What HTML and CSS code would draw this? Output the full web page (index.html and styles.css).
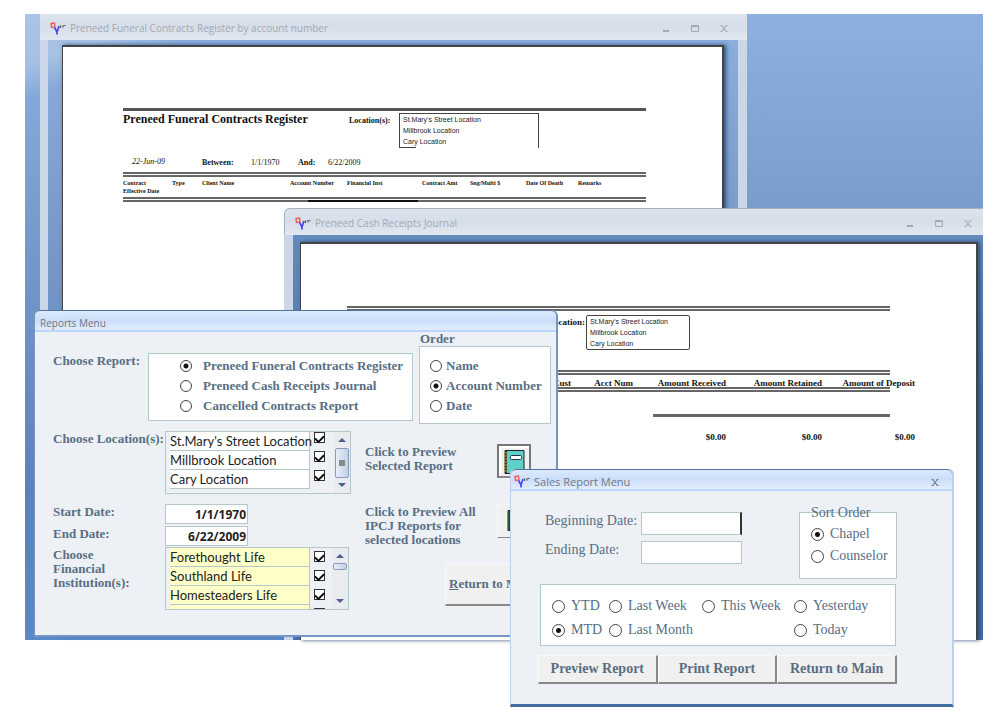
FILE: index.html
```html
<!DOCTYPE html>
<html lang="en">
<head>
<meta charset="utf-8">
<title>Preneed Reports</title>
<link rel="stylesheet" href="styles.css">
</head>
<body>
<svg class="defs" aria-hidden="true">
  <symbol id="logo" viewBox="0 0 18 13">
    <path d="M2 1.500l3.500-.5.5 4-3.500.5z" fill="none" stroke="#f25a5a" stroke-width="1.400"/>
    <path d="M5.500 5.500L8 10l2-6M8 9v3.500" fill="none" stroke="#4646f0" stroke-width="1.700"/>
    <path d="M11.500 3.500v2.500M14 3v2.500M15 3.500h1.500" fill="none" stroke="#555" stroke-width="1.200"/>
  </symbol>
  <symbol id="min" viewBox="0 0 10 10"><path d="M2 8h6" stroke="currentColor" stroke-width="2"/></symbol>
  <symbol id="max" viewBox="0 0 10 10"><path d="M1.500 2.500h7v6h-7zM1 3.500h8" fill="none" stroke="currentColor"/></symbol>
  <symbol id="close" viewBox="0 0 10 10"><path d="M2.500 2.500l5 6M7.500 2.500l-5 6M1.500 2.500h2M6.500 2.500h2M1.500 8.500h2M6.500 8.500h2" fill="none" stroke="currentColor" stroke-width="1.100"/></symbol>
  <symbol id="up" viewBox="0 0 10 6"><path d="M5 1l4 4H1z" fill="#4d5f92"/></symbol>
  <symbol id="down" viewBox="0 0 10 6"><path d="M1 1h8L5 5z" fill="#4d5f92"/></symbol>
  <symbol id="book" viewBox="0 0 26 26">
    <path d="M4 1.500h19v23H4z" fill="#5fcfca" stroke="#222"/>
    <path d="M5 2v22" stroke="#333" stroke-width="2"/>
    <path d="M3 4h4M3 7h4M3 10h4M3 13h4M3 16h4M3 19h4M3 22h4" stroke="#b7a92c"/>
    <rect x="9.500" y="6.500" width="11" height="4" rx="1" fill="#fff" stroke="#234"/>
  </symbol>
  <symbol id="books" viewBox="0 0 26 26">
    <path d="M7 2.500h17v20H7z" fill="#5f9a4c" stroke="#222"/>
    <path d="M8.500 3v19" stroke="#2c4a22" stroke-width="2"/>
  </symbol>
</svg>
<main class="desktop">
  <section class="window register">
    <header class="titlebar inactive">
      <svg class="logo"><use href="#logo"/></svg><h1>Preneed Funeral Contracts Register by account number</h1>
      <button aria-label="Minimize"><svg><use href="#min"/></svg></button>
      <button aria-label="Maximize"><svg><use href="#max"/></svg></button>
      <button aria-label="Close"><svg><use href="#close"/></svg></button>
    </header>
    <div class="register-body">
      <article class="sheet register-sheet">
        <hr class="rule-thick">
        <div class="register-head">
          <h2>Preneed Funeral Contracts Register</h2>
          <strong>Location(s):</strong>
          <ul class="places open"><li>St.Mary's Street Location</li><li>Millbrook Location</li><li>Cary Location</li></ul>
        </div>
        <div class="register-dates"><em>22-Jun-09</em><b>Between:</b><span>1/1/1970</span><b>And:</b><span>6/22/2009</span></div>
        <table class="register-table">
          <colgroup><col class="c1"><col class="c2"><col class="c3"><col class="c4"><col class="c5"><col class="c6"><col class="c7"><col class="c8"><col></colgroup>
          <tr><th>Contract<br>Effective Date</th><th>Type</th><th>Client Name</th><th>Account Number</th><th>Financial Inst</th><th>Contract Amt</th><th>Sng/Multi $</th><th>Date Of Death</th><th>Remarks</th></tr>
        </table>
        <div class="sort-mark"></div>
      </article>
    </div>
  </section>

  <section class="window journal">
    <header class="titlebar inactive">
      <svg class="logo"><use href="#logo"/></svg><h1>Preneed Cash Receipts Journal</h1>
      <button aria-label="Minimize"><svg><use href="#min"/></svg></button>
      <button aria-label="Maximize"><svg><use href="#max"/></svg></button>
      <button aria-label="Close"><svg><use href="#close"/></svg></button>
    </header>
    <div class="journal-body">
      <article class="sheet journal-sheet">
        <div class="journal-head">
          <strong>Location:</strong>
          <ul class="places"><li>St.Mary's Street Location</li><li>Millbrook Location</li><li>Cary Location</li></ul>
        </div>
        <table class="journal-table">
          <colgroup><col class="j1"><col class="j2"><col class="j3"><col class="j4"><col></colgroup>
          <thead><tr><th>Cust</th><th>Acct Num</th><th>Amount Received</th><th>Amount Retained</th><th><span>Amount of Deposit</span></th></tr></thead>
          <tbody>
            <tr><td colspan="5" class="total-line"><hr></td></tr>
            <tr><td></td><td></td><td>$0.00</td><td>$0.00</td><td><span>$0.00</span></td></tr>
          </tbody>
        </table>
      </article>
    </div>
  </section>

  <section class="window reports">
    <header class="titlebar"><h1>Reports Menu</h1></header>
    <form class="reports-body">
      <div class="report-choice">
        <span class="caption">Choose Report:</span>
        <div class="group report-group" role="radiogroup" aria-label="Choose Report">
          <label><input type="radio" name="report" checked>Preneed Funeral Contracts Register</label>
          <label><input type="radio" name="report">Preneed Cash Receipts Journal</label>
          <label><input type="radio" name="report">Cancelled Contracts Report</label>
        </div>
        <div class="order" role="radiogroup" aria-labelledby="order-title">
          <span id="order-title">Order</span>
          <div class="group order-group">
            <label><input type="radio" name="order">Name</label>
            <label><input type="radio" name="order" checked>Account Number</label>
            <label><input type="radio" name="order">Date</label>
          </div>
        </div>
      </div>
      <div class="columns">
        <div class="fields">
          <span class="caption">Choose Location(s):</span>
          <div class="listbox">
            <ul class="rows">
              <li><label for="l1">St.Mary's Street Location</label><input id="l1" type="checkbox" checked></li>
              <li><label for="l2">Millbrook Location</label><input id="l2" type="checkbox" checked></li>
              <li><label for="l3">Cary Location</label><input id="l3" type="checkbox" checked></li>
            </ul>
            <div class="scroll"><svg><use href="#up"/></svg><i class="thumb tall"></i><svg><use href="#down"/></svg></div>
          </div>
          <label for="start">Start Date:</label><input class="date" id="start" type="text" value="1/1/1970">
          <label for="end">End Date:</label><input class="date" id="end" type="text" value="6/22/2009">
          <span class="caption">Choose<br>Financial<br>Institution(s):</span>
          <div class="listbox yellow">
            <ul class="rows">
              <li><label for="f1">Forethought Life</label><input id="f1" type="checkbox" checked></li>
              <li><label for="f2">Southland Life</label><input id="f2" type="checkbox" checked></li>
              <li><label for="f3">Homesteaders Life</label><input id="f3" type="checkbox" checked></li>
              <li><label for="f4">Pioneer Am. Life</label><input id="f4" type="checkbox" checked></li>
            </ul>
            <div class="scroll"><svg><use href="#up"/></svg><i class="thumb"></i><svg><use href="#down"/></svg></div>
          </div>
        </div>
        <div class="actions">
          <div class="action"><span>Click to Preview<br>Selected Report</span><button type="button" class="book strong" aria-label="Preview selected report"><svg><use href="#book"/></svg></button></div>
          <div class="action"><span>Click to Preview All<br>IPCJ Reports for<br>selected locations</span><button type="button" class="book" aria-label="Preview all reports"><svg><use href="#books"/></svg></button></div>
          <button type="button" class="push return"><u>R</u>eturn to Main</button>
        </div>
      </div>
    </form>
  </section>

  <section class="window sales">
    <header class="titlebar">
      <svg class="logo"><use href="#logo"/></svg><h1>Sales Report Menu</h1>
      <button aria-label="Close"><svg><use href="#close"/></svg></button>
    </header>
    <form class="sales-body">
      <div class="sales-top">
        <div class="period">
          <label for="begin">Beginning Date:</label><input class="focus" id="begin" type="text">
          <label for="ending">Ending Date:</label><input id="ending" type="text">
        </div>
        <div class="group sort" role="radiogroup" aria-labelledby="sort-title">
          <span id="sort-title">Sort Order</span>
          <label><input type="radio" name="sort" checked>Chapel</label>
          <label><input type="radio" name="sort">Counselor</label>
        </div>
      </div>
      <div class="group range" role="radiogroup" aria-label="Report period">
        <label><input type="radio" name="range">YTD</label>
        <label><input type="radio" name="range">Last Week</label>
        <label><input type="radio" name="range">This Week</label>
        <label><input type="radio" name="range">Yesterday</label>
        <label><input type="radio" name="range" checked>MTD</label>
        <label><input type="radio" name="range">Last Month</label>
        <label class="today"><input type="radio" name="range">Today</label>
      </div>
      <div class="sales-buttons">
        <button type="button" class="push">Preview Report</button>
        <button type="button" class="push">Print Report</button>
        <button type="button" class="push">Return to Main</button>
      </div>
    </form>
  </section>
</main>
</body>
</html>
```
FILE: styles.css
```css
* { box-sizing: border-box; }
body { min-height: 100vh; margin: 0; padding: 14px 17px 87px 25px; background: #fff; font-family: "Liberation Serif", serif; color: #586e83; }
h1, h2, ul, hr { margin: 0; padding: 0; }
li { list-style: none; }
button { padding: 0; font: inherit; color: inherit; }
.defs { display: none; }

.desktop {
  position: relative;
  height: calc(100vh - 101px);
  min-height: 626px;
  background:
    linear-gradient(160deg, rgba(255,255,255,.25) 0 50px, transparent 80px),
    linear-gradient(#8cb0e0, #7a9ccb 200px, #5b82b8 480px, #5a88c8);
}
.window { position: absolute; display: flex; flex-direction: column; }

.titlebar {
  display: flex;
  align-items: center;
  flex: none;
  height: 22px;
  padding: 4px 12px 0 2px;
  border-top: 1px solid #54729f;
  border-bottom: 2px solid #bbd6f8;
  border-radius: 5px 5px 0 0;
  background: linear-gradient(#dce9fb, #cbdef8 50%, #e2edfc);
  color: #6d7785;
}
.titlebar h1 { flex: 1; font: 11px/16px "Open Sans", sans-serif; white-space: nowrap; }
.titlebar button { width: 10px; height: 10px; margin-left: 19px; border: 0; background: none; }
.titlebar button svg { display: block; width: 10px; height: 10px; }
.logo { flex: none; width: 18px; height: 13px; margin-right: 3px; }
.inactive { height: 26px; padding: 2px 18px 0 9px; border: 0; border-radius: 0; background: linear-gradient(#dce3ec, #d6deea 50%, #e2e8f1); color: #a4a9b0; }
.inactive h1 { font-size: 10px; }

.sheet { border: solid #444; border-width: 2px 2px 0 1px; background: #fff; color: #111; box-shadow: 2px 0 4px #324e78; }

.register { left: 15px; top: 0; bottom: 5px; width: 707px; }
.register-body { display: flex; flex: 1; padding: 5px 14px 0; border: solid #cbd7e8; border-width: 0 9px 0 8px; }
.register-sheet { flex: 1; padding: 61px 76px 0 60px; }
.rule-thick { height: 3px; border: 0; background: #555; }
.register-head { display: flex; height: 42px; padding-top: 2px; }
.register-head h2 { width: 226px; font-size: 12px; line-height: 13px; white-space: nowrap; }
.register-head strong { width: 50px; font-size: 8px; line-height: 16px; }
.places { border: 1px solid #444; padding: 0 3px; font: 7px/11px "Liberation Sans", sans-serif; color: #222; white-space: nowrap; }
.open { width: 140px; height: 35px; border-bottom: 0; background: linear-gradient(#444, #444) 0 100% / 16px 1px no-repeat; }
.register-dates { display: flex; padding: 5px 0 0 9px; height: 19px; font-size: 8px; line-height: 10px; }
.register-dates em { width: 70px; line-height: 8px; }
.register-dates b { width: 49px; }
.register-dates span { width: 47px; white-space: nowrap; }
.register-dates b ~ b { width: 30px; }
.register-table { width: 100%; table-layout: fixed; border-collapse: separate; border-spacing: 0; border: double #666; border-width: 5px 0; }
.register-table th { height: 20px; padding: 2px 0 0; vertical-align: top; text-align: left; font-size: 6px; line-height: 8px; white-space: nowrap; }
.c1 { width: 49px; } .c2 { width: 30px; } .c3 { width: 88px; } .c4 { width: 57px; } .c5 { width: 75px; } .c6 { width: 48px; } .c7 { width: 56px; } .c8 { width: 52px; }
.sort-mark { width: 110px; height: 2px; margin: -2px 0 0 185px; background: #111; }

.journal { left: 259px; right: 0; top: 194px; bottom: 0; }
.journal .titlebar { height: 27px; padding-right: 10px; border-top: 1px solid #a5b2c5; border-left: 1px solid #a5b2c5; border-top-left-radius: 6px; }
.journal-body { display: flex; flex: 1; padding: 7px 5px 0 7px; border-left: 9px solid #cbd7e8; background: linear-gradient(#658bbf, #4a70a8 180px, #4870ad); }
.journal-sheet { flex: 1; padding: 62px 86px 0 46px; }
.journal-head { display: flex; align-items: flex-start; height: 64px; padding: 4px 0 0 201px; border-top: 5px double #666; }
.journal-head strong { width: 38px; font-size: 9px; line-height: 14px; }
.journal-head .places { width: 104px; height: 35px; border-radius: 2px; }
.journal-table { width: 100%; table-layout: fixed; border-collapse: separate; border-spacing: 0; }
.journal-table th { height: 22px; padding: 5px 0 0; border: double #666; border-width: 5px 0; font-size: 9px; line-height: 7px; text-align: right; white-space: nowrap; }
.journal-table td { padding: 14px 0 0; font-size: 9px; font-weight: bold; line-height: 12px; text-align: right; }
.journal-table th span, .journal-table td span { display: block; margin: 0 -25px 0 -20px; }
.journal-table .total-line { padding: 22px 0 0 306px; }
.total-line hr { height: 3px; border: 0; background: #666; }
.j1 { width: 224px; } .j2 { width: 62px; } .j3 { width: 93px; } .j4 { width: 96px; }

.reports { left: 9px; top: 296px; width: 524px; border: solid #7795c4; border-width: 0 2px 2px 1px; border-radius: 6px 6px 0 0; background: #edf1f5; }
.reports-body { padding: 0 5px 25px 18px; font-size: 13px; font-weight: bold; line-height: 14px; }
.reports .titlebar h1 { font-size: 10px; padding-left: 3px; }
.group { border: 1px solid #b4c8ca; background: #fff; }
.group label { display: flex; align-items: center; white-space: nowrap; }
.report-choice { display: flex; align-items: flex-start; height: 98px; }
.report-choice .caption { width: 95px; padding-top: 22px; white-space: nowrap; }
.report-group { width: 265px; height: 68px; margin: 21px 6px 0 0; padding: 2px 0 0 31px; }
.report-group label { height: 20px; gap: 11px; }
.order { width: 132px; }
.order > span { padding-left: 1px; }
.order-group { height: 78px; padding: 9px 0 0 10px; }
.order-group label { height: 20px; gap: 4px; }
input[type="radio"] { appearance: none; flex: none; width: 12px; height: 12px; margin: 0; border: 1px solid #444; border-radius: 50%; background: #fff; }
input[type="radio"]:checked { background: radial-gradient(circle, #111 0 2px, #fff 3px); }
.columns { display: flex; }
.fields { display: grid; grid-template-columns: 112px 186px; grid-template-rows: 73px 22px 21px 63px; flex: none; align-items: start; white-space: nowrap; padding-top: 1px; }
.fields .caption { padding-top: 1px; }
.listbox { display: flex; height: 63px; border: 1px solid #b4c8ca; padding-left: 4px; overflow: hidden; }
.yellow { width: 184px; }
.rows { flex: 1; font: 13px/18px Lato, sans-serif; color: #222; }
.rows li { display: flex; height: 19px; }
.rows label { width: 140px; border: solid #b4c8ca; border-width: 0 1px 1px 0; background: #fff; }
.yellow .rows label { background: #ffffc8; }
.rows input { appearance: none; display: grid; place-items: center; width: 11px; height: 11px; margin: 0 0 0 4px; border: 1px solid #333; background: #fff; }
.rows input:checked::before { content: ""; width: 7px; height: 4px; border: solid #111; border-width: 0 0 2px 2px; rotate: -45deg; }
.yellow .rows input { margin-top: 3px; }
.scroll { display: flex; flex-direction: column; align-items: center; justify-content: space-between; width: 16px; padding: 5px 0; background: #e9ebee; }
.scroll svg { width: 10px; height: 6px; }
.thumb { width: 14px; height: 7px; margin-bottom: 24px; border: 1px solid #8c9bbd; border-radius: 2px; background: linear-gradient(90deg, #e8eef9, #c3d0e6); }
.tall { height: 30px; margin: 0; background: linear-gradient(#888, #888) center / 6px 6px no-repeat, linear-gradient(90deg, #e8eef9, #c3d0e6); }
.fields > label { padding-top: 1px; }
.date { width: 83px; height: 20px; padding: 0 1px; border: 1px solid #b4c8ca; background: #fff; font: bold 12px "Open Sans", sans-serif; color: #222; text-align: right; }
.actions { flex: 1; padding: 14px 0 0 14px; white-space: nowrap; min-width: 0; }
.action { display: flex; justify-content: space-between; align-items: flex-start; height: 60px; padding-right: 20px; }
.action span { padding-top: 1px; }
.book { width: 34px; height: 34px; border: 1px solid; border-color: #f7f7f7 #888 #888 #f7f7f7; background: #eef0f1; }
.book svg { display: block; width: 26px; height: 26px; margin: 3px auto; }
.strong { border: 2px solid; border-color: #777 #777 #8b8085 #777; box-shadow: inset 2px 2px #fff; }
.push { border: solid; border-width: 1px 2px 2px 1px; border-color: #f9f9f9 #888 #888 #f9f9f9; background: #f0f0f0; color: #586e83; font-weight: bold; }
.return { display: block; width: 106px; height: 43px; margin: -1px 0 0 80px; padding-left: 3px; font-size: 13px; text-align: left; }

.sales { left: 485px; top: 455px; width: 444px; border: solid #bdd1ef; border-width: 0 2px 3px 1px; border-bottom-color: #426b9f; border-radius: 5px 5px 0 0; background: #edf1f5; font-size: 14px; }
.sales-body { padding: 20px 55px 20px 27px; }
.sales-top { display: flex; justify-content: space-between; padding-left: 7px; }
.period { display: grid; grid-template-columns: 96px 101px; grid-auto-rows: 24px; row-gap: 5px; align-items: center; white-space: nowrap; }
.period label { height: 20px; }
.period input { width: 101px; height: 23px; border: 1px solid #b4c8ca; background: #fff; }
.period .focus { border-right: 2px solid #333; }
.sort { width: 98px; height: 67px; padding-left: 11px; margin-top: 1px; line-height: 16px; }
.sort > span { display: block; height: 13px; margin-top: -8px; white-space: nowrap; }
.sort label { height: 22px; gap: 6px; }
.sort > span + label { margin-top: 5px; }
.range { display: grid; grid-template-columns: 57px 93px 92px 1fr; grid-auto-rows: 24px; width: 356px; height: 62px; margin: 5px 0 9px 2px; padding: 9px 0 0 11px; }
.range label { gap: 6px; }
.range .today { grid-column: 4; }
.sort input[type="radio"], .range input[type="radio"] { width: 13px; height: 13px; }
.sales-buttons { display: grid; grid-template-columns: repeat(3, 1fr); }
.sales-buttons .push { height: 29px; font-size: 14px; white-space: nowrap; }
```
